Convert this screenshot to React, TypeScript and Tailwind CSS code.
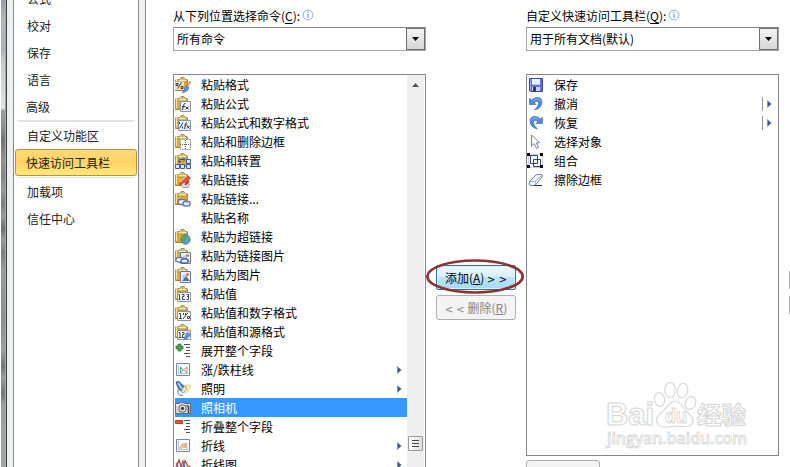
import React from "react";

type Kind = string;

function Clip({ children }: { children?: React.ReactNode }) {
  return (
    <svg width="16" height="16" viewBox="0 0 16 16" fill="none">
      <path d="M0 2.500h12.500v11.500H0z" fill="#e3a92f" />
      <path d="M.5 13.500h12" stroke="#b57a14" />
      <path d="M.5 13V3" stroke="#c8922a" />
      <path d="M1.500 12V3.500h3" stroke="#ffe594" />
      <path d="M12.500 3v10" stroke="#b98424" />
      <path d="M3 5V2.500h2L6 .5h3l1 2h2V5z" fill="#f5e7a4" stroke="#9c8a4a" strokeWidth=".9" />
      <path d="M6.500 2h2" stroke="#7d6c35" />
      {children}
    </svg>
  );
}

function Icon({ kind }: { kind: Kind }) {
  switch (kind) {
    case "format":
      return (
        <Clip>
          <path d="M0 5h9v8H0z" fill="#e8dfc4" />
          <path d="M2.500 11.500l4-6M1 6.500h2v2H1zM6 9.500h2v2H6z" stroke="#3a3a3c" />
          <path d="M15.500 4.500l-3.500 5" stroke="#e59b45" strokeWidth="2" />
          <path d="M11.500 8.500l2.500 2q-2 5-7 5 2.500-2 2.500-4z" fill="#5b9cea" stroke="#2f68bd" strokeWidth=".7" />
        </Clip>
      );
    case "formula":
      return (
        <Clip>
          <path d="M5.500 5.500h10v10h-10z" fill="#eef3fc" stroke="#8295b8" />
          <path d="M10.500 7.500q-1.500-.5-2 2L7.500 14M7 10.500h3M10.500 10.500l3 3M13.500 10.500l-3 3" stroke="#26344d" />
        </Clip>
      );
    case "formulaNumber":
      return (
        <Clip>
          <path d="M3.500 5.500h12v10h-12z" fill="#eef3fc" stroke="#8295b8" />
          <path d="M4.500 13.500l3.500-6M4.500 7v2M7.500 11.500v2M12 7.500q-1.500 0-1.500 2L9.500 14M9.500 10h3M12 11l2.500 2.500M14.500 11L12 13.500" stroke="#26344d" />
        </Clip>
      );
    case "border":
      return (
        <Clip>
          <path d="M5 5h11v11H5z" fill="#fff" />
          <path d="M5.500 5.500h10v10h-10zM10.500 6v10M5 10.500h11" stroke="#666" strokeDasharray="1 1" />
        </Clip>
      );
    case "transpose":
      return (
        <Clip>
          <path d="M4.500 9.500V6.500h5M8 4.500l2 2-2 2M3 8l1.500 2L6 8" stroke="#2456b0" />
          <path d="M.5 11.500h4v4h-4zM5.500 11.500h4v4h-4zM11.500 6.500h4v4h-4zM11.500 11.500h4v4h-4z" fill="#d9e6fb" stroke="#3f5f98" />
        </Clip>
      );
    case "link":
      return (
        <Clip>
          <path d="M4 12l9-8 2.500 2-7 8z" fill="#e35540" stroke="#a03528" strokeWidth=".7" />
          <path d="M5 10l7-6" stroke="#ffd9a0" />
          <path d="M6 13l3-2.500 5.500 1.500L13 15.500H8z" fill="#e4e6ee" stroke="#76707f" strokeWidth=".7" />
          <path d="M10 13l4-4" stroke="#c5402f" strokeWidth="2" />
        </Clip>
      );
    case "chain":
      return (
        <Clip>
          <rect x="3" y="8.500" width="8" height="5" rx="2.500" fill="#fff" stroke="#64799d" strokeWidth="1.500" />
          <rect x="8" y="10.500" width="7" height="4.500" rx="2" fill="#dce9fa" stroke="#667fa9" strokeWidth="1.500" />
        </Clip>
      );
    case "globe":
      return (
        <Clip>
          <circle cx="10.500" cy="10.500" r="4.700" fill="#5aa0e2" stroke="#3a70ad" strokeWidth=".8" />
          <path d="M7.500 7l3-1 2 2-2 2v2l-1.500 2.500-2.500-4zM13 9.500l2-.5-1 4z" fill="#52aa50" />
        </Clip>
      );
    case "linkedPicture":
    case "picture":
      return (
        <Clip>
          <path d="M5.500 4.500h10v11h-10z" fill="#eaf1fd" stroke="#6279a8" />
          <path d="M7 14l4-5 4 5z" fill="#4f6f9f" />
          <path d="M7 9l3-2 1 2-3 3z" fill="#b4c8e9" />
          <circle cx="12.500" cy="7.500" r="1.600" fill="#ec7044" />
          {kind === "linkedPicture" && (
            <>
              <rect x="1" y="9.500" width="7" height="4.500" rx="2" fill="#fff" stroke="#637ba6" strokeWidth="1.300" />
              <rect x="6" y="11" width="7" height="4" rx="2" fill="#eaf2ff" stroke="#536b94" strokeWidth="1.300" />
            </>
          )}
        </Clip>
      );
    case "value":
    case "percent":
    case "source":
      return (
        <Clip>
          <path d="M2.500 6.500h13v9h-13z" fill="#f5f8fd" stroke="#8194b8" />
          {kind === "value" && (
            <path d="M3.500 8.500h1V13M3.500 13.500h2M7 8.500h2v2H7.500v3H10M11.500 8.500h2v5h-2M12 10.500h1.500" stroke="#384352" />
          )}
          {kind === "percent" && (
            <path d="M4 8.500h1.500V13M4 13.500h3M8 14l5-6.500M8.500 8v2M10.500 8v2M12.500 11.500h2v2h-2z" stroke="#384352" />
          )}
          {kind === "source" && (
            <>
              <path d="M4 8.500h1V13M3.500 13.500h3M7 8.500h2v2H7.500v3h2" stroke="#384352" />
              <path d="M15.500 5l-3 4" stroke="#eeb05e" strokeWidth="2" />
              <path d="M11.500 9l3.500 1q-1 5-6 5z" fill="#5b9cea" stroke="#2f68bd" strokeWidth=".6" />
            </>
          )}
        </Clip>
      );
    case "expand":
    case "collapse":
      return (
        <svg width="16" height="16" viewBox="0 0 16 16" fill="none">
          {kind === "expand" ? (
            <path d="M3 1h3v2h2v3H6v2H3V6H1V3h2z" fill="#4f9a4e" stroke="#2f7338" strokeWidth=".7" />
          ) : (
            <path d="M.5 1.500h7v3h-7z" fill="#e9573d" stroke="#c23a26" />
          )}
          <path d="M9 1.500h6M11 4.500h4M11 7.500h4M9 10.500h6M11 13.500h4" stroke="#4a505c" />
        </svg>
      );
    case "bars":
    case "lines":
      return (
        <svg width="16" height="16" viewBox="0 0 16 16" fill="none">
          <path d="M1.500 1.500h13v12h-13z" fill="#f8fbff" stroke="#6d87ad" />
          <path d="M3.500 3v8.500H13" stroke="#b6c0d0" />
          {kind === "bars" ? (
            <>
              <path d="M5.500 5v6l2.500-3z" stroke="#5b9a78" />
              <path d="M12 5v6L8.500 8z" stroke="#c98c66" />
            </>
          ) : (
            <>
              <path d="M5 11l2-5 2 4 2-5 1 6" stroke="#eba347" />
              <path d="M6 11l3-6 1 5 2-5" stroke="#dcae93" />
            </>
          )}
        </svg>
      );
    case "light":
      return (
        <svg width="16" height="16" viewBox="0 0 16 16" fill="none">
          <path d="M5 4l10.500 0q.5 5-6 8.500z" fill="#fbeeb4" stroke="#ddcb86" strokeWidth=".8" />
          <path d="M1 1l3-.5 5 5q1 3-1 6-5-2-7-10.500z" fill="#4a7fb8" stroke="#284f82" strokeWidth=".8" />
          <path d="M3 2l4 6" stroke="#b9d5f0" strokeWidth="1.500" />
          <ellipse cx="9" cy="8.500" rx="1.800" ry="3.600" transform="rotate(32 9 8.500)" fill="#f7e9a6" stroke="#8698ae" strokeWidth=".8" />
          <path d="M3 8v4.500q1 2 5 2" stroke="#5f7596" />
        </svg>
      );
    case "camera":
      return (
        <svg width="16" height="16" viewBox="0 0 16 16" fill="none">
          <path d="M.5 3.500h4v-1h5v1h6v10H.5z" fill="#d5d3cf" stroke="#6d6a67" />
          <path d="M1 5h14" stroke="#f6f4ee" strokeWidth="1.500" />
          <circle cx="7.500" cy="8.500" r="3.700" fill="#eee" stroke="#55565a" />
          <circle cx="7.500" cy="8.500" r="1.800" fill="#3a4552" />
          <path d="M13.500 6v7M11.500 5.500h2" stroke="#45464c" strokeWidth="1.500" />
        </svg>
      );
    case "chart":
      return (
        <svg width="16" height="16" viewBox="0 0 16 16" fill="none">
          <path d="M1 10l3-7 3 9 3-8 4 7 1-2" stroke="#e14431" strokeWidth="1.500" />
          <path d="M1 6l4 7 3-9 3 9 4-4" stroke="#3f78b5" strokeWidth="1.200" />
        </svg>
      );
    case "save":
      return (
        <svg width="16" height="16" viewBox="0 0 16 16" fill="none">
          <path d="M1.500 1.500h13v13h-12l-1-1z" fill="#5f71cf" stroke="#38479b" />
          <path d="M4 2h8v6H4z" fill="#e9f1fc" />
          <path d="M4 7h8v1H4z" fill="#b4c6ea" />
          <path d="M4 10h8v4H4z" fill="#cdd3e6" />
          <path d="M5 10h3v4H5z" fill="#2b3767" />
          <path d="M2.500 2v11" stroke="#97abec" />
        </svg>
      );
    case "undo":
    case "redo":
      return (
        <svg width="16" height="16" viewBox="0 0 16 16" fill="none" className={kind === "redo" ? "-scale-x-100" : ""}>
          <path d="M1.500 2.500v6h6.500L6 6.500Q11 4 10.500 8q-.5 3-4 6 7-1.500 7.500-7.500Q14 1 8.500 1.500 5.500 2 3.700 4z" fill="#4f8ad6" stroke="#3a73c0" strokeWidth=".7" />
          <path d="M5.500 4.500Q11 1 12.500 5.500" stroke="#8fb9ee" />
        </svg>
      );
    case "pointer":
      return (
        <svg width="16" height="16" viewBox="0 0 16 16">
          <path d="M3.500 1v11l2.700-2.500 2.300 4.800 2-.9-2.200-4.600h3.400z" fill="#fff" stroke="#7482a0" />
        </svg>
      );
    case "group":
      return (
        <svg width="17" height="16" viewBox="0 0 17 16" fill="none" className="-ml-px">
          <path d="M1.500 1.500h14v13h-14z" stroke="#c9d0da" />
          <path d="M3.500 2.500h7v8h-7zM6.500 6.500h7v7h-7z" stroke="#2c4568" />
          <path d="M0 0h3v3H0zM13 0h3v3h-3zM0 12h3v3H0zM13 12h3v3h-3z" fill="#050505" />
        </svg>
      );
    case "eraser":
      return (
        <svg width="16" height="16" viewBox="0 0 16 16" fill="none">
          <path d="M1.500 9.500L8 3q.7-.5 1.500-.5H13q2 0 1 2.500l-6 7.500q-1 1-2 1H2.500q-2-1-1-4z" fill="#f4f7fc" stroke="#667ca5" />
          <path d="M1.500 9.500H6q1.500 0 2 2.500M7 9.500L14 3.500" stroke="#9aabc6" />
          <path d="M6 13.500h8" stroke="#26334a" />
        </svg>
      );
    default:
      return null;
  }
}

const commands: { text: string; icon: Kind; arrow?: boolean; selected?: boolean }[] = [
  { text: "粘贴格式", icon: "format" },
  { text: "粘贴公式", icon: "formula" },
  { text: "粘贴公式和数字格式", icon: "formulaNumber" },
  { text: "粘贴和删除边框", icon: "border" },
  { text: "粘贴和转置", icon: "transpose" },
  { text: "粘贴链接", icon: "link" },
  { text: "粘贴链接...", icon: "chain" },
  { text: "粘贴名称", icon: "" },
  { text: "粘贴为超链接", icon: "globe" },
  { text: "粘贴为链接图片", icon: "linkedPicture" },
  { text: "粘贴为图片", icon: "picture" },
  { text: "粘贴值", icon: "value" },
  { text: "粘贴值和数字格式", icon: "percent" },
  { text: "粘贴值和源格式", icon: "source" },
  { text: "展开整个字段", icon: "expand" },
  { text: "涨/跌柱线", icon: "bars", arrow: true },
  { text: "照明", icon: "light", arrow: true },
  { text: "照相机", icon: "camera", selected: true },
  { text: "折叠整个字段", icon: "collapse" },
  { text: "折线", icon: "lines", arrow: true },
  { text: "折线图", icon: "chart", arrow: true },
];

const toolbar: { text: string; icon: Kind; arrow?: boolean }[] = [
  { text: "保存", icon: "save" },
  { text: "撤消", icon: "undo", arrow: true },
  { text: "恢复", icon: "redo", arrow: true },
  { text: "选择对象", icon: "pointer" },
  { text: "组合", icon: "group" },
  { text: "擦除边框", icon: "eraser" },
];

function Arrow() {
  return (
    <svg width="5" height="8" viewBox="0 0 5 8" className="shrink-0">
      <path d="M.5 .5v7L4.500 4z" fill="#3f568f" />
      <path d="M.5 .5v7" stroke="#8391c0" />
    </svg>
  );
}

function Label({ text, letter }: { text: string; letter: string }) {
  return (
    <div className="flex h-[27px] items-start pt-[7px] leading-[17px]">
      <span>
        {text}(<u className="underline-offset-2">{letter}</u>):
      </span>
      <svg width="12" height="12" viewBox="0 0 12 12" className="ml-[2px] mt-[2px]" fill="none">
        <circle cx="6" cy="6" r="4.900" stroke="#8eadd5" />
        <path d="M6 5v4M6 2.700v1.200" stroke="#6287bb" />
      </svg>
    </div>
  );
}

function Combo({ value }: { value: string }) {
  return (
    <div className="flex h-6 w-full border border-[#a5a6ad] border-t-[#858692] bg-white">
      <span className="flex-1 pl-[3px] leading-[21px]">{value}</span>
      <span className="flex w-[19px] items-center justify-center border border-[#707070] bg-gradient-to-b from-[#f4f4f4] to-[#d6d6d6]">
        <svg width="7" height="4" viewBox="0 0 7 4"><path d="M0 0h7L3.500 4z" fill="#000" /></svg>
      </span>
    </div>
  );
}

function NavItem({ children, className = "" }: { children: React.ReactNode; className?: string }) {
  return <div className={`h-[27px] shrink-0 leading-[27px] ${className}`}>{children}</div>;
}

function Watermark() {
  return (
    <div className="absolute left-[78px] top-[306px] h-[72px] w-[150px]">
      <svg width="150" height="72" viewBox="0 0 150 72" fill="#fff" stroke="#d8d8d8" strokeWidth="1.200">
        <text x="1" y="44" fontFamily="Liberation Sans" fontWeight="700" fontSize="31" textLength="48" lengthAdjust="spacingAndGlyphs">Bai</text>
        <ellipse cx="54.500" cy="18.500" rx="5" ry="7" transform="rotate(-10 54.500 18.500)" />
        <ellipse cx="65" cy="9" rx="5.200" ry="7.500" />
        <ellipse cx="77.500" cy="9.500" rx="5.200" ry="7.200" transform="rotate(15 77.500 9.500)" />
        <ellipse cx="85.500" cy="22" rx="5.200" ry="6.500" transform="rotate(20 85.500 22)" />
        <path d="M70 20q4 0 7 5l7 8q6 5 3 10-3 4-17 2-14 3-17-2-4-5 2-10l8-8q3-5 7-5z" />
        <text x="60" y="42" fontFamily="Liberation Sans" fontWeight="700" fontSize="20" strokeWidth="1" textLength="22" lengthAdjust="spacingAndGlyphs">du</text>
        <text x="92" y="43" fontFamily="Noto Sans CJK SC" fontWeight="700" fontSize="24" textLength="49" lengthAdjust="spacingAndGlyphs">经验</text>
        <text x="2" y="63" fontFamily="Open Sans" fontWeight="600" fontSize="16" strokeWidth=".9" textLength="140" lengthAdjust="spacingAndGlyphs">jingyan.baidu.com</text>
      </svg>
    </div>
  );
}

export default function App() {
  return (
    <div className="flex h-[467px] w-[790px] overflow-hidden bg-white font-['Noto_Sans_CJK_SC','Noto_Sans',sans-serif] text-[12px] text-black">
      <div className="ml-px w-[4px] shrink-0 bg-[linear-gradient(to_bottom,#9a9da8_0px,#b5b7b8_20px,#adb1b5_50px,#c6c8c8_60px,#e4e4e4_108px,#999c9c_111px,#8f9292_125px,#747474_140px,#8f9191_160px,#858585_175px,#979a9a_190px,#7c7c7c_204px,#999c9b_215px,#6e6e6e_229px,#999c9b_240px,#7c7e7e_253px,#989b9a_270px,#8b8f8f_320px,#9da09f_350px,#757575_366px,#9a9d9c_378px,#747575_394px,#9da09f_405px,#a3a5a4_467px)]" />
      <div className="w-px shrink-0 bg-[#a5a9a9]" />
      <div className="w-px shrink-0 bg-[#3c4146]" />
      <div className="w-[6px] shrink-0 bg-[#eef0f0]" />
      <nav className="flex w-[126px] shrink-0 flex-col border-x border-[#858692] bg-white text-[#222]">
        <NavItem className="-mt-[15px] pl-[13px]">公式</NavItem>
        <NavItem className="pl-[13px]">校对</NavItem>
        <NavItem className="pl-[13px]">保存</NavItem>
        <NavItem className="pl-[13px]">语言</NavItem>
        <NavItem className="pl-[12px]">高级</NavItem>
        <div className="ml-1 h-[2px] w-[116px] shrink-0 bg-[#e2e2e2]" />
        <NavItem className="pl-[13px]">自定义功能区</NavItem>
        <div className="ml-px flex h-[27px] w-[122px] shrink-0 items-center rounded-[3px] border border-[#bd9136] bg-gradient-to-b from-[#ffd878] via-[#ffd365] to-[#ffe97b] pl-[10px]">快速访问工具栏</div>
        <div className="ml-1 mt-px h-px w-[116px] shrink-0 bg-[#e2e2e2]" />
        <NavItem className="pl-[13px]">加载项</NavItem>
        <NavItem className="pl-[13px]">信任中心</NavItem>
      </nav>
      <div className="w-[6px] shrink-0 bg-[#efefef]" />
      <main className="flex min-w-0 flex-1 border-l border-[#858692]">
        <section className="ml-[27px] w-[253px] shrink-0">
          <Label text="从下列位置选择命令" letter="C" />
          <Combo value="所有命令" />
          <div className="mt-[23px] flex h-[420px] border border-[#858692] bg-white">
            <div className="flex-1 pl-px">
              {commands.map((c) => (
                <div key={c.text} className={`flex h-[19px] items-center pr-[5px] ${c.selected ? "bg-[#3399ff] text-white" : ""}`}>
                  <span className="h-4 w-4 shrink-0"><Icon kind={c.icon} /></span>
                  <span className="ml-[10px] flex-1 leading-[18px]">{c.text}</span>
                  {c.arrow && <Arrow />}
                </div>
              ))}
            </div>
            <div className="flex w-[18px] shrink-0 flex-col items-center border-r border-white bg-[#efefef] pt-2">
              <svg width="7" height="4" viewBox="0 0 7 4"><path d="M0 4h7L3.500 0z" fill="#555" /></svg>
              <div className="mt-[349px] flex h-[15px] w-[15px] shrink-0 flex-col items-center justify-center gap-[2px] rounded-[1px] border border-[#999] bg-gradient-to-r from-white to-[#ddd]">
                <i className="h-px w-[7px] bg-[#444]" /><i className="h-px w-[7px] bg-[#444]" /><i className="h-px w-[7px] bg-[#444]" />
              </div>
            </div>
          </div>
        </section>
        <section className="relative ml-[10px] w-[80px] shrink-0 pt-[265px]">
          <button className="block h-[25px] w-full rounded-[2px] border border-[#3c6fa0] bg-[linear-gradient(#ecf7fd_0%,#d8effb_48%,#bce5fa_50%,#a6d9f4_100%)] leading-[23px] shadow-[inset_0_0_0_1px_#d8f4ff]">
            添加(<u>A</u>) <span className="font-['DejaVu_Sans'] text-[10px]">&gt; &gt;</span>
          </button>
          <button className="mt-[5px] block h-[25px] w-full rounded-[3px] border border-[#acb0b2] bg-[#f4f4f4] leading-[23px] text-[#838383]">
            <span className="font-['DejaVu_Sans'] text-[10px]">&lt; &lt;</span> 删除(<u>R</u>)
          </button>
          <svg className="pointer-events-none absolute -left-[10px] top-[259px]" width="100" height="36" viewBox="0 0 100 36" fill="none">
            <ellipse cx="49" cy="17.500" rx="47.700" ry="16" stroke="#8b3332" strokeWidth="2.700" />
          </svg>
        </section>
        <section className="ml-[10px] w-[253px] shrink-0">
          <Label text="自定义快速访问工具栏" letter="Q" />
          <Combo value="用于所有文档(默认)" />
          <div className="relative mt-[23px] h-[382px] border border-[#858692] bg-white">
            {toolbar.map((c) => (
              <div key={c.text} className="flex h-[19px] items-center pl-px pr-[6px]">
                <span className="h-4 w-4 shrink-0"><Icon kind={c.icon} /></span>
                <span className="ml-[10px] flex-1 leading-[19px]">{c.text}</span>
                {c.arrow && <span className="flex items-center gap-1 border-l border-[#8a99b1] py-[3px] pl-1"><Arrow /></span>}
              </div>
            ))}
            <Watermark />
          </div>
          <div className="mt-1 h-[25px] w-[74px] rounded-[3px] border border-[#acb0b2] bg-[#f4f4f4]" />
        </section>
        <div className="ml-auto flex w-px flex-col pt-[271px]">
          <div className="h-[18px] bg-[#acacac]" />
          <div className="mt-[7px] h-[18px] bg-[#acacac]" />
        </div>
      </main>
    </div>
  );
}
